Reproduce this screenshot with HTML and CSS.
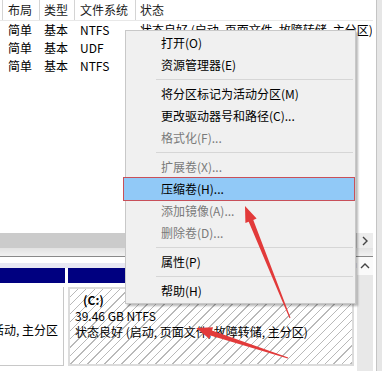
FILE: index.html
```html
<!DOCTYPE html>
<html>
<head>
<meta charset="utf-8">
<link rel="stylesheet" href="styles.css">
</head>
<body>
<div class="app">
  <div class="content">
    <div class="list">
      <div class="row head">
        <div class="c c0"></div>
        <div class="c c1">布局</div>
        <div class="c c2">类型</div>
        <div class="c c3">文件系统</div>
        <div class="c c4">状态</div>
      </div>
      <div class="row">
        <div class="c c0"></div><div class="c c1">简单</div><div class="c c2">基本</div><div class="c c3">NTFS</div><div class="c c4">状态良好 (启动, 页面文件, 故障转储, 主分区)</div>
      </div>
      <div class="row">
        <div class="c c0"></div><div class="c c1">简单</div><div class="c c2">基本</div><div class="c c3">UDF</div><div class="c c4"></div>
      </div>
      <div class="row">
        <div class="c c0"></div><div class="c c1">简单</div><div class="c c2">基本</div><div class="c c3">NTFS</div><div class="c c4"></div>
      </div>
    </div>
    <div class="hscroll">
      <div class="track"></div>
      <div class="sbtn"><svg width="8" height="10" viewBox="0 0 8 10"><polyline points="2,1 6,5 2,9" fill="none" stroke="#444" stroke-width="1.4"/></svg></div>
    </div>
    <div class="split"></div>
    <div class="bottom">
      <div class="disks">
        <div class="strip"></div>
        <div class="parts">
          <div class="part p1">
            <div class="bar"></div>
            <div class="box plain">
              <div class="ln"></div>
              <div class="ln"></div>
              <div class="ln right">活动, 主分区</div>
            </div>
          </div>
          <div class="part p2">
            <div class="bar"></div>
            <div class="box hatch">
              <div class="ln name">(C:)</div>
              <div class="ln">39.46 GB NTFS</div>
              <div class="ln">状态良好 (启动, 页面文件, 故障转储, 主分区)</div>
            </div>
          </div>
        </div>
      </div>
      <div class="vscroll">
        <div class="sbtn up"><svg width="10" height="8" viewBox="0 0 10 8"><polyline points="1,6 5,2 9,6" fill="none" stroke="#444" stroke-width="1.4"/></svg></div>
        <div class="vtrack"></div>
      </div>
    </div>
  </div>
  <div class="edge"></div>
</div>

<div class="menu">
  <div class="item">打开(O)</div>
  <div class="item">资源管理器(E)</div>
  <div class="sep"></div>
  <div class="item">将分区标记为活动分区(M)</div>
  <div class="item">更改驱动器号和路径(C)...</div>
  <div class="item off">格式化(F)...</div>
  <div class="sep"></div>
  <div class="item off">扩展卷(X)...</div>
  <div class="item hot">压缩卷(H)...</div>
  <div class="item off">添加镜像(A)...</div>
  <div class="item off">删除卷(D)...</div>
  <div class="sep"></div>
  <div class="item">属性(P)</div>
  <div class="sep"></div>
  <div class="item">帮助(H)</div>
</div>

<svg class="arrows" width="382" height="371" viewBox="0 0 382 371">
  <polygon points="245,206 256.6,218.6 253.3,220 290.5,317.8 289.5,318.2 248.7,221.8 245.4,223.1"/>
  <polygon points="196,328 213.1,327.3 212,330.6 288.2,357.5 287.8,358.5 210.4,335.4 209.3,338.7"/>
</svg>
</body>
</html>
```

FILE: styles.css
```css
html, body {
  margin: 0;
  padding: 0;
}
body {
  width: 382px;
  height: 371px;
  overflow: hidden;
  position: relative;
  background: #fff;
  font-family: "Noto Sans CJK SC", "Microsoft YaHei", sans-serif;
  font-size: 12px;
  color: #000;
}
.app {
  display: flex;
  height: 371px;
}
.content {
  width: 373px;
  display: flex;
  flex-direction: column;
}
.edge {
  width: 9px;
  background: linear-gradient(to right, #fff 0 3px, #c4c4c4 3px 4px, #e6e6e6 4px);
}

/* list */
.list {
  height: 233px;
  overflow: hidden;
  background: #fff;
}
.row {
  display: flex;
  height: 18px;
  line-height: 18px;
  white-space: nowrap;
}
.row.head {
  height: 20px;
  line-height: 20px;
  border-bottom: 1px solid #e8e8e8;
  color: #1a1a1a;
}
.c {
  box-sizing: border-box;
  border-right: 1px solid transparent;
  padding-left: 5px;
  overflow: hidden;
}
.head .c {
  border-right-color: #d4d4d4;
}
.c0 { width: 3px; padding-left: 0; }
.c1 { width: 37px; }
.c2 { width: 35px; padding-left: 4px; }
.c3 { width: 61px; }
.c4 { flex: 1; padding-left: 4px; }
.head .c4 { border-right-color: transparent; }

/* scrollbars */
.hscroll {
  height: 15px;
  display: flex;
}
.hscroll .track {
  flex: 1;
  background: #cbcbcb;
}
.sbtn {
  width: 16px;
  display: flex;
  align-items: center;
  justify-content: center;
  background: #ececec;
}
.split {
  height: 8px;
  background: linear-gradient(#e2e2e2, #f2f2f2);
  border-bottom: 1px solid #8a8a8a;
}
.bottom {
  flex: 1;
  display: flex;
  background: #fff;
}
.disks {
  flex: 1;
  padding-top: 6px;
}
.strip {
  height: 5px;
  background: #e8e8f3;
}
.parts {
  display: flex;
  gap: 3px;
}
.part {
  display: flex;
  flex-direction: column;
}
.bar {
  height: 15px;
  background: #000080;
}
.box {
  margin-top: 4px;
  height: 79px;
  box-sizing: border-box;
  padding-top: 3px;
  overflow: hidden;
  white-space: nowrap;
}
.p1 { width: 65px; }
.p1 .box {
  width: 64px;
  border-right: 1px solid #c8c8c8;
  border-bottom: 1px solid #c8c8c8;
}
.p2 { width: 286px; }
.p2 .box {
  border: 2px solid #dcdcdc;
  padding-left: 5px;
  background: repeating-linear-gradient(135deg, #fff 0 5px, #b9b9b9 5px 6px);
}
.ln {
  height: 16px;
  line-height: 16px;
}
.ln.right {
  display: flex;
  justify-content: flex-end;
  padding-right: 5px;
}
.ln.name {
  font-weight: bold;
  padding-left: 8px;
}
.vscroll {
  width: 16px;
  display: flex;
  flex-direction: column;
}
.vscroll .up {
  height: 18px;
  background: #fafafa;
}
.vtrack {
  flex: 1;
  background: #e8e8e8;
}

/* context menu */
.menu {
  position: absolute;
  left: 125px;
  top: 30px;
  width: 231px;
  box-sizing: border-box;
  border: 1px solid #c8c8c8;
  background: #f0f0f0;
  padding: 1px 2px 1px 2px;
  box-shadow: 2px 2px 2px rgba(0, 0, 0, 0.28);
}
.item {
  height: 22px;
  line-height: 22px;
  padding-left: 33px;
  white-space: nowrap;
  color: #000;
}
.item.off {
  color: #7a7a7a;
}
.item.hot {
  background: #91c9f7;
  margin-left: -4px;
  margin-right: -1px;
  padding-left: 37px;
  box-shadow: 0 0 0 1px #c8505a;
  position: relative;
}
.sep {
  height: 7px;
  display: flex;
  align-items: center;
  padding-left: 28px;
}
.sep::after {
  content: "";
  flex: 1;
  height: 1px;
  background: #d6d6d6;
}

/* annotation arrows */
.arrows {
  position: absolute;
  left: 0;
  top: 0;
  pointer-events: none;
  fill: #e23a3a;
}
```
